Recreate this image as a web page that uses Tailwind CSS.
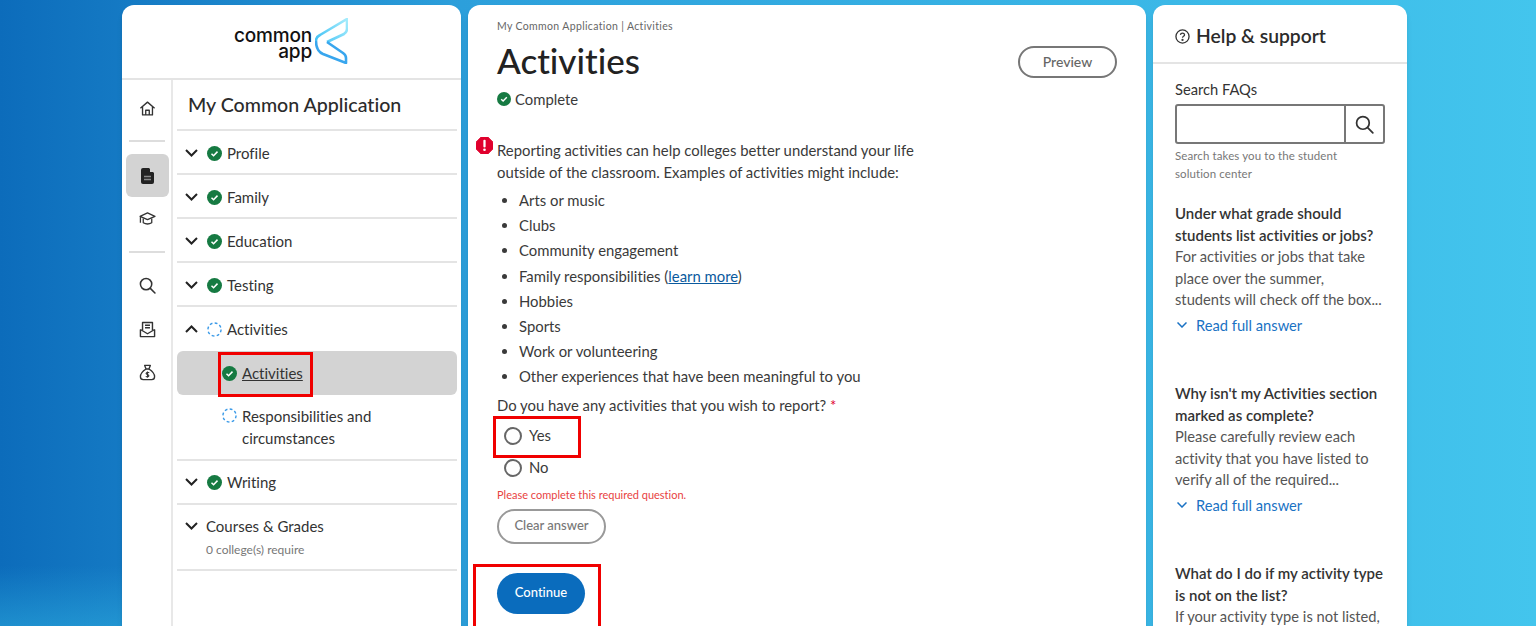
<!DOCTYPE html>
<html lang="en">
<head>
  <meta charset="UTF-8">
  <title>Common App - Activities</title>
  <script src="https://cdn.jsdelivr.net/npm/@tailwindcss/browser@4"></script>
</head>
<body class="h-[626px] overflow-hidden font-['Lato',sans-serif] text-[#333] [font-variant-ligatures:none]">
  <div class="relative flex h-[626px] gap-[7px] overflow-hidden bg-gradient-to-r from-[#0c6cbb] via-[#2c9fdb] via-30% to-[#43c5ed] pl-[122px] pt-[5px]">
    <div class="absolute bottom-0 left-0 h-[60px] w-[122px] bg-gradient-to-t from-[#2fb0e0]/50 to-transparent"></div>

    <!-- left card -->
    <aside class="relative flex h-[700px] w-[339px] shrink-0 flex-col rounded-t-xl bg-white shadow-md">
      <div class="flex h-[75px] shrink-0 items-center justify-center border-b-2 border-[#e4e4e4] pr-[1px]">
        <div class="flex items-center">
          <div class="mt-[5px] text-right font-['Inter',sans-serif] text-[19px] leading-[16px] font-medium tracking-[-0.2px] text-[#111]">
            <div>common</div>
            <div>app</div>
          </div>
          <svg class="ml-[3px] -mt-[1px]" width="33" height="46" viewBox="0 0 33 46" fill="none">
            <defs>
              <linearGradient id="wingTop" x1="1" y1="24" x2="32" y2="1" gradientUnits="userSpaceOnUse"><stop offset="0" stop-color="#3fc0f5"/><stop offset="1" stop-color="#a5ecfc"/></linearGradient>
            </defs>
            <path d="M1 23 Q1 19 5 17 L32 1 V11 Q32 14 29 16 L12 24" stroke="url(#wingTop)" stroke-width="2.600" stroke-linejoin="round"/>
            <path d="M12 24 L28 35 Q31 37 31 40 V45 L8 36 Q1 33 1 23" stroke="#38a6ee" stroke-width="2.600" stroke-linejoin="round"/>
          </svg>
        </div>
      </div>
      <div class="flex flex-1">
        <!-- icon rail -->
        <div class="flex w-[51px] shrink-0 flex-col items-center border-r-2 border-[#e8e8e8] pl-[1px] pt-[6px] text-[#333]">
          <div class="flex h-[44px] w-full items-center justify-center">
            <svg width="17" height="17" viewBox="0 0 24 24" fill="none" stroke="currentColor" stroke-width="1.900" stroke-linejoin="round"><path d="M2 11.500 12 3l10 8.500"/><path d="M5 9.500V21h14V9.500"/><path d="M9.500 21v-6.500h5V21"/></svg>
          </div>
          <div class="mt-[10px] h-[2px] w-[36px] bg-[#ddd]"></div>
          <div class="mt-[12px] flex h-[43px] w-[43px] shrink-0 items-center justify-center rounded-md bg-[#d3d3d3]">
            <svg width="15" height="17" viewBox="0 0 15 17"><path d="M3 1h6l5 5v9a2 2 0 0 1-2 2H3a2 2 0 0 1-2-2V3a2 2 0 0 1 2-2z" fill="#222"/><path d="M10 1v4h4" fill="#d3d3d3"/><path d="M4 9.500h7M4 12.500h7" stroke="#888" stroke-width="1.300"/></svg>
          </div>
          <div class="flex h-[42px] w-full items-center justify-center">
            <svg width="17" height="15" viewBox="0 0 24 20" fill="none" stroke="currentColor" stroke-width="1.800" stroke-linejoin="round"><path d="M1.500 7 12 2l10.500 5L12 11.500z"/><path d="M6 10v6q6 3.500 12 0v-6"/><path d="M2 8v8"/></svg>
          </div>
          <div class="mt-[12px] h-[2px] w-[36px] bg-[#ddd]"></div>
          <div class="mt-[10px] flex h-[44px] w-full items-center justify-center">
            <svg width="17" height="17" viewBox="0 0 24 24" fill="none" stroke="currentColor" stroke-width="2.200" stroke-linecap="round"><circle cx="10" cy="10" r="8"/><path d="m16 16 6.500 6.500"/></svg>
          </div>
          <div class="flex h-[44px] w-full items-center justify-center">
            <svg width="17" height="17" viewBox="0 0 24 24" fill="none" stroke="currentColor" stroke-width="2" stroke-linejoin="round"><path d="M2 12v10h20V12"/><path d="M2 12l10 6 10-6"/><path d="M5 13V2h14v11"/><path d="M8.500 6h7M8.500 9.500h7"/></svg>
          </div>
          <div class="flex h-[43px] w-full items-center justify-center">
            <svg width="17" height="17" viewBox="0 0 24 24" fill="none" stroke="currentColor" stroke-width="1.900" stroke-linejoin="round"><path d="M8 2h8l-2 5h-4z"/><path d="M10 7C5 10 2 14 2 18q0 4 4 4h12q4 0 4-4c0-4-3-8-8-11"/><path d="M14.500 12.500q-2.500-1.500-4 0t1.500 2.500q3 1 1.500 2.500t-4 0M12 10.500v9" stroke-width="1.500"/></svg>
          </div>
        </div>

        <!-- section nav -->
        <nav class="flex-1 pl-[4px] pr-[4px] text-[15px] text-[#333]">
          <div class="flex h-[51px] items-center border-b-2 border-[#e4e4e4] pl-[11px] text-[19.600px] font-medium text-[#2b2b2b]">My Common Application</div>

          <div class="flex h-[44px] items-center border-b-2 border-[#e4e4e4] pl-[8px] pt-[2px]">
            <svg class="mr-[9px]" width="13" height="8" viewBox="0 0 13 8" fill="none" stroke="#222" stroke-width="2"><path d="m1 1 5.500 5.500L12 1"/></svg>
            <svg class="mr-[5px]" width="15" height="15" viewBox="0 0 16 16"><circle cx="8" cy="8" r="8" fill="#167a42"/><path d="m4.800 8.200 2.200 2.200 4.200-4.400" fill="none" stroke="#fff" stroke-width="1.600"/></svg>
            Profile
          </div>
          <div class="flex h-[44px] items-center border-b-2 border-[#e4e4e4] pl-[8px] pt-[2px]">
            <svg class="mr-[9px]" width="13" height="8" viewBox="0 0 13 8" fill="none" stroke="#222" stroke-width="2"><path d="m1 1 5.500 5.500L12 1"/></svg>
            <svg class="mr-[5px]" width="15" height="15" viewBox="0 0 16 16"><circle cx="8" cy="8" r="8" fill="#167a42"/><path d="m4.800 8.200 2.200 2.200 4.200-4.400" fill="none" stroke="#fff" stroke-width="1.600"/></svg>
            Family
          </div>
          <div class="flex h-[44px] items-center border-b-2 border-[#e4e4e4] pl-[8px] pt-[2px]">
            <svg class="mr-[9px]" width="13" height="8" viewBox="0 0 13 8" fill="none" stroke="#222" stroke-width="2"><path d="m1 1 5.500 5.500L12 1"/></svg>
            <svg class="mr-[5px]" width="15" height="15" viewBox="0 0 16 16"><circle cx="8" cy="8" r="8" fill="#167a42"/><path d="m4.800 8.200 2.200 2.200 4.200-4.400" fill="none" stroke="#fff" stroke-width="1.600"/></svg>
            Education
          </div>
          <div class="flex h-[44px] items-center border-b-2 border-[#e4e4e4] pl-[8px] pt-[2px]">
            <svg class="mr-[9px]" width="13" height="8" viewBox="0 0 13 8" fill="none" stroke="#222" stroke-width="2"><path d="m1 1 5.500 5.500L12 1"/></svg>
            <svg class="mr-[5px]" width="15" height="15" viewBox="0 0 16 16"><circle cx="8" cy="8" r="8" fill="#167a42"/><path d="m4.800 8.200 2.200 2.200 4.200-4.400" fill="none" stroke="#fff" stroke-width="1.600"/></svg>
            Testing
          </div>

          <div class="border-b-2 border-[#e4e4e4]">
            <div class="flex h-[44px] items-center pl-[8px]">
              <svg class="mr-[9px]" width="13" height="8" viewBox="0 0 13 8" fill="none" stroke="#222" stroke-width="2"><path d="m1 7 5.500-5.500L12 7"/></svg>
              <svg class="mr-[5px]" width="15" height="15" viewBox="0 0 16 16" fill="none"><circle cx="8" cy="8" r="7" stroke="#3a9ae8" stroke-width="1.500" stroke-dasharray="3 2.500"/></svg>
              Activities
            </div>
            <div class="relative flex h-[44px] items-center rounded-md bg-[#d3d3d3] pl-[45px]">
              <svg class="mr-[5px]" width="15" height="15" viewBox="0 0 16 16"><circle cx="8" cy="8" r="8" fill="#167a42"/><path d="m4.800 8.200 2.200 2.200 4.200-4.400" fill="none" stroke="#fff" stroke-width="1.600"/></svg>
              <span class="underline">Activities</span>
              <div class="absolute left-[41px] top-[1px] h-[45px] w-[95px] border-[3px] border-[#f00000]"></div>
            </div>
            <div class="flex h-[64px] items-start pl-[45px] pt-[10px] leading-[22px]">
              <svg class="mr-[5px] mt-[3px] shrink-0" width="15" height="15" viewBox="0 0 16 16" fill="none"><circle cx="8" cy="8" r="7" stroke="#3a9ae8" stroke-width="1.500" stroke-dasharray="3 2.500"/></svg>
              <span class="w-[160px]">Responsibilities and circumstances</span>
            </div>
          </div>

          <div class="flex h-[44px] items-center border-b-2 border-[#e4e4e4] pl-[8px]">
            <svg class="mr-[9px]" width="13" height="8" viewBox="0 0 13 8" fill="none" stroke="#222" stroke-width="2"><path d="m1 1 5.500 5.500L12 1"/></svg>
            <svg class="mr-[5px]" width="15" height="15" viewBox="0 0 16 16"><circle cx="8" cy="8" r="8" fill="#167a42"/><path d="m4.800 8.200 2.200 2.200 4.200-4.400" fill="none" stroke="#fff" stroke-width="1.600"/></svg>
            Writing
          </div>
          <div class="h-[66px] border-b-2 border-[#e4e4e4] pl-[8px] pt-[10px]">
            <div class="flex items-center">
              <svg class="mr-[8px]" width="13" height="8" viewBox="0 0 13 8" fill="none" stroke="#222" stroke-width="2"><path d="m1 1 5.500 5.500L12 1"/></svg>
              Courses &amp; Grades
            </div>
            <div class="ml-[21px] mt-[3px] text-[12px] text-[#777]">0 college(s) require</div>
          </div>
        </nav>
      </div>
    </aside>

    <!-- main card -->
    <main class="relative h-[700px] w-[678px] shrink-0 rounded-t-xl bg-white pl-[29px] text-[14.850px] text-[#3a3a3a] shadow-md">
      <div class="pt-[14px] text-[10.500px] leading-[14px] tracking-[0.35px] text-[#666]">My Common Application | Activities</div>
      <div class="mt-[4px] flex h-[50px] items-center justify-between pr-[29px]">
        <h1 class="-mt-[4px] text-[35px] font-medium text-[#222]">Activities</h1>
        <button class="-mt-[1px] h-[32px] w-[99px] rounded-full border-2 border-[#777] text-[14px] font-medium text-[#666]">Preview</button>
      </div>
      <div class="flex h-[24px] items-center">
        <svg class="mr-[4px]" width="14" height="14" viewBox="0 0 16 16"><circle cx="8" cy="8" r="8" fill="#167a42"/><path d="m4.800 8.200 2.200 2.200 4.200-4.400" fill="none" stroke="#fff" stroke-width="1.600"/></svg>
        Complete
      </div>
      <div class="relative mt-[28px] w-[430px] leading-[22px]">
        <svg class="absolute -left-[21px] top-[-2px]" width="17" height="17" viewBox="0 0 18 18"><path d="M5.500 0h7L18 5.500v7L12.500 18h-7L0 12.500v-7z" fill="#e0002d" stroke="#e0002d" stroke-linejoin="round"/><path d="M9 4v6" stroke="#fff" stroke-width="2.400" stroke-linecap="round"/><circle cx="9" cy="13.500" r="1.400" fill="#fff"/></svg>
        Reporting activities can help colleges better understand your life outside of the classroom. Examples of activities might include:
      </div>
      <ul class="mt-[5px] list-disc pl-[22px] leading-[25.200px]">
        <li>Arts or music</li>
        <li>Clubs</li>
        <li>Community engagement</li>
        <li>Family responsibilities (<a class="text-[#0a5a9e] underline">learn more</a>)</li>
        <li>Hobbies</li>
        <li>Sports</li>
        <li>Work or volunteering</li>
        <li>Other experiences that have been meaningful to you</li>
      </ul>
      <div class="mt-[4px] leading-[22px]">Do you have any activities that you wish to report? <span class="text-[#e0002d]">*</span></div>
      <div class="relative mt-[4px] flex h-[32px] items-center">
        <span class="ml-[7px] mr-[7px] h-[18px] w-[18px] rounded-full border-2 border-[#666]"></span>Yes
        <div class="absolute -left-[4px] -top-[4px] h-[42px] w-[88px] border-[3px] border-[#f00000]"></div>
      </div>
      <div class="flex h-[32px] items-center">
        <span class="ml-[7px] mr-[7px] h-[18px] w-[18px] rounded-full border-2 border-[#666]"></span>No
      </div>
      <div class="mt-[4px] text-[11px] leading-[14px] text-[#e8423f]">Please complete this required question.</div>
      <button class="mt-[7px] block h-[35px] w-[109px] rounded-full border-2 border-[#999] text-[13px] font-medium text-[#777]">Clear answer</button>
      <div class="relative mt-[29px]">
        <button class="block h-[41px] w-[88px] rounded-full bg-[#0a6cbd] text-[13px] font-medium text-white">Continue</button>
        <div class="absolute -left-[24px] -top-[9px] h-[70px] w-[128px] border-[3px] border-[#f00000]"></div>
      </div>
    </main>

    <!-- help card -->
    <aside class="relative h-[700px] w-[254px] shrink-0 rounded-t-xl bg-white text-[14.700px] text-[#555] shadow-md">
      <div class="flex h-[59px] items-center border-b-2 border-[#e4e4e4] pl-[22px] pt-[6px] text-[19.300px] font-semibold text-[#2b2b2b]">
        <svg class="mr-[6px]" width="15" height="15" viewBox="0 0 16 16" fill="none" stroke="#333" stroke-width="1.400"><circle cx="8" cy="8" r="7"/><path d="M5.800 6.300q.2-2 2.200-2t2.200 1.800q0 1-1.100 1.600-1.100.6-1.100 1.700"/><circle cx="8" cy="11.700" r=".5" fill="#333"/></svg>
        Help &amp; support
      </div>
      <div class="pl-[22px] pr-[22px]">
        <div class="mt-[14px] leading-[22px] text-[#333]">Search FAQs</div>
        <div class="mt-[4px] flex h-[40px] w-[210px] rounded-[3px] border-2 border-[#777]">
          <div class="flex-1 border-r-2 border-[#777]"></div>
          <div class="flex w-[37px] items-center justify-center">
            <svg width="19" height="19" viewBox="0 0 24 24" fill="none" stroke="#333" stroke-width="2.200" stroke-linecap="round"><circle cx="10" cy="10" r="8"/><path d="m16 16 6.500 6.500"/></svg>
          </div>
        </div>
        <div class="mt-[3px] w-[180px] text-[11.500px] leading-[18px] tracking-[0.1px] text-[#777]">Search takes you to the student solution center</div>

        <div class="mt-[20px] leading-[21.500px]">
          <div class="text-[15px] font-semibold text-[#333]">Under what grade should students list activities or jobs?</div>
          <div>For activities or jobs that take<br>place over the summer,<br>students will check off the box...</div>
          <div class="mt-[4px] flex items-center text-[#1a72c4]">
            <svg class="ml-[2px] mr-[9px]" width="10" height="6" viewBox="0 0 10 6" fill="none" stroke="#1a72c4" stroke-width="1.500"><path d="m.5.500 4.500 4.500L9.500.500"/></svg>
            Read full answer
          </div>
        </div>
        <div class="mt-[47px] leading-[21.500px]">
          <div class="text-[15px] font-semibold text-[#333]">Why isn't my Activities section marked as complete?</div>
          <div>Please carefully review each<br>activity that you have listed to<br>verify all of the required...</div>
          <div class="mt-[4px] flex items-center text-[#1a72c4]">
            <svg class="ml-[2px] mr-[9px]" width="10" height="6" viewBox="0 0 10 6" fill="none" stroke="#1a72c4" stroke-width="1.500"><path d="m.5.500 4.500 4.500L9.500.500"/></svg>
            Read full answer
          </div>
        </div>
        <div class="mt-[47px] leading-[21.500px]">
          <div class="text-[15px] font-semibold text-[#333]">What do I do if my activity type is not on the list?</div>
          <div>If your activity type is not listed, choose the closest match...</div>
        </div>
      </div>
    </aside>
  </div>
</body>
</html>
